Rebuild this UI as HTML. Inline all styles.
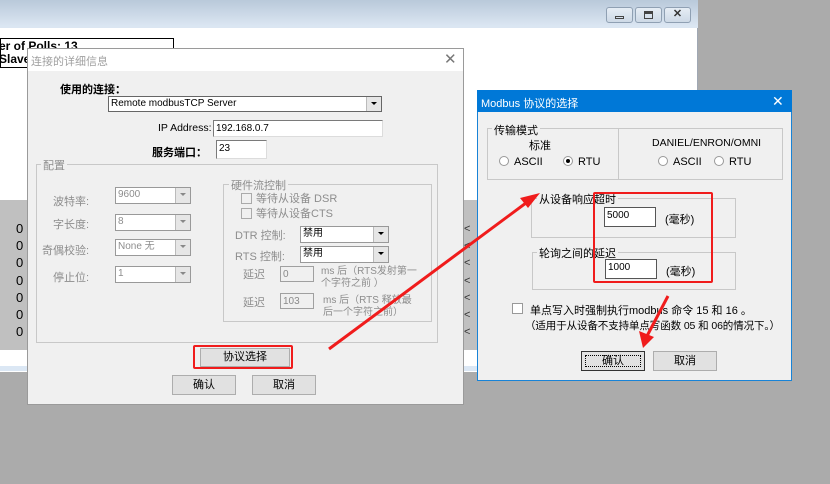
<!DOCTYPE html>
<html><head><meta charset="utf-8"><style>
*{margin:0;padding:0;box-sizing:border-box}
body{width:830px;height:484px;overflow:hidden;background:#ababab;position:relative;font-family:"Liberation Sans","Noto Sans CJK SC",sans-serif;font-size:11px;color:#000}
.a{position:absolute;white-space:nowrap}
.in{position:absolute;background:#fff;border:1px solid #7a7a7a;border-right-color:#dcdcdc;border-bottom-color:#dcdcdc;padding:1px 2px;font-size:10px;line-height:13px}
.dis{background:#f0f0f0;color:#8a8a8a;border-color:#a0a0a0}
.cb{position:absolute;border:1px solid #999;background:#fff;font-size:10px;line-height:13px;padding:0 2px}
.cb:after{content:"";position:absolute;right:0;top:0;width:14px;height:100%;background:#e6e6e6;border-left:1px solid #bbb}
.cb i{position:absolute;right:4px;top:5px;width:0;height:0;border-left:3px solid transparent;border-right:3px solid transparent;border-top:3px solid #000;z-index:2}
.g{color:#8d8d8d}
.grp{position:absolute;border:1px solid #c8c8c8}
.btn{position:absolute;background:#e1e1e1;border:1px solid #adadad;text-align:center;font-size:11px}
.rad{display:inline-block;width:10px;height:10px;border:1px solid #999;border-radius:50%;background:#fff;vertical-align:-1px;margin-right:5px;position:relative}
.chk{position:absolute;width:11px;height:11px;border:1px solid #999;background:#fff}
</style></head><body>
<div class="a" style="left:0;top:0;width:698px;height:372px;background:#fff;border-right:1px solid #a0a8b4"></div>
<div class="a" style="left:0;top:0;width:698px;height:26px;background:linear-gradient(#b9c9da,#dbe6f2)"></div>
<div class="a" style="left:606px;top:7px;width:27px;height:16px;border:1px solid #8fa0b3;border-radius:3px;background:linear-gradient(#e6edf5,#cdd9e6)"><div style="position:absolute;left:8px;top:8px;width:9px;height:3px;border:1px solid #444"></div></div>
<div class="a" style="left:635px;top:7px;width:27px;height:16px;border:1px solid #8fa0b3;border-radius:3px;background:linear-gradient(#e6edf5,#cdd9e6)"><div style="position:absolute;left:8px;top:3px;width:9px;height:8px;border:1px solid #444;border-top-width:3px"></div></div>
<div class="a" style="left:664px;top:7px;width:27px;height:16px;border:1px solid #8fa0b3;border-radius:3px;background:linear-gradient(#e6edf5,#cdd9e6);text-align:center;font-size:11px;line-height:13px;color:#333;font-weight:bold">✕</div>
<div class="a" style="left:0;top:26px;width:698px;height:2px;background:#dbe6f2"></div>
<div class="a" style="left:0;top:200px;width:697px;height:150px;background:#c0c0c0"></div>
<div class="a" style="left:0;top:366px;width:697px;height:5px;background:#dbe7f4"></div>
<div class="a" style="left:0;top:38px;width:174px;height:30px;border:1px solid #000;background:#fff"></div>
<div class="a" style="left:-1px;top:40px;font-weight:bold;font-size:12px;line-height:13px">er of Polls: 13<br>Slave</div>
<div class="a" style="left:16px;top:220px;font-size:13px;line-height:17.2px">0<br>0<br>0<br>0<br>0<br>0<br>0</div>
<div class="a" style="left:464px;top:221px;font-size:11px;line-height:17.2px;color:#333">&lt;<br>&lt;<br>&lt;<br>&lt;<br>&lt;<br>&lt;<br>&lt;</div>

<div class="a" style="left:27px;top:48px;width:437px;height:357px;background:#f0f0f0;border:1px solid #9a9a9a"></div>
<div class="a" style="left:28px;top:49px;width:435px;height:22px;background:#fff"></div>
<div class="a g" style="left:31px;top:53px;color:#a0a0a0">连接的详细信息</div>
<div class="a" style="left:444px;top:50px;font-size:15px;color:#777">✕</div>
<div class="a" style="left:60px;top:81px;font-weight:bold">使用的连接：</div>
<div class="cb" style="left:108px;top:96px;width:274px;height:16px;border-color:#666">Remote modbusTCP Server<i></i></div>
<div class="a" style="left:158px;top:122px;font-size:10.5px">IP Address:</div>
<div class="in" style="left:213px;top:120px;width:170px;height:17px">192.168.0.7</div>
<div class="a" style="left:152px;top:144px;font-weight:bold">服务端口：</div>
<div class="in" style="left:216px;top:140px;width:51px;height:19px">23</div>
<div class="grp" style="left:36px;top:164px;width:402px;height:179px"></div>
<div class="a g" style="left:41px;top:157px;background:#f0f0f0;padding:0 2px">配置</div>
<div class="a g" style="left:53px;top:193px">波特率:</div>
<div class="cb dis g" style="left:115px;top:187px;width:76px;height:17px">9600<i style="border-top-color:#888"></i></div>
<div class="a g" style="left:53px;top:216px">字长度:</div>
<div class="cb dis g" style="left:115px;top:214px;width:76px;height:17px">8<i style="border-top-color:#888"></i></div>
<div class="a g" style="left:42px;top:242px">奇偶校验:</div>
<div class="cb dis g" style="left:115px;top:239px;width:76px;height:17px">None 无<i style="border-top-color:#888"></i></div>
<div class="a g" style="left:53px;top:269px">停止位:</div>
<div class="cb dis g" style="left:115px;top:266px;width:76px;height:17px">1<i style="border-top-color:#888"></i></div>
<div class="grp" style="left:223px;top:184px;width:209px;height:138px"></div>
<div class="a g" style="left:229px;top:177px;background:#f0f0f0;padding:0 2px">硬件流控制</div>
<div class="chk" style="left:241px;top:193px;border-color:#aaa;background:#f0f0f0"></div>
<div class="a g" style="left:256px;top:190px">等待从设备 DSR</div>
<div class="chk" style="left:241px;top:208px;border-color:#aaa;background:#f0f0f0"></div>
<div class="a g" style="left:256px;top:205px">等待从设备CTS</div>
<div class="a g" style="left:235px;top:227px">DTR 控制:</div>
<div class="cb" style="left:300px;top:226px;width:89px;height:17px">禁用<i></i></div>
<div class="a g" style="left:235px;top:248px">RTS 控制:</div>
<div class="cb" style="left:300px;top:246px;width:89px;height:17px">禁用<i></i></div>
<div class="a g" style="left:243px;top:266px">延迟</div>
<div class="in dis" style="left:280px;top:266px;width:34px;height:16px">0</div>
<div class="a g" style="left:321px;top:266px;font-size:10px;line-height:12px">ms 后（RTS发射第一<br>个字符之前 ）</div>
<div class="a g" style="left:243px;top:294px">延迟</div>
<div class="in dis" style="left:280px;top:293px;width:34px;height:16px">103</div>
<div class="a g" style="left:323px;top:295px;font-size:10px;line-height:12px">ms 后（RTS 释放最<br>后一个字符之前）</div>
<div class="btn" style="left:200px;top:348px;width:90px;height:19px;line-height:17px">协议选择</div>
<div class="btn" style="left:172px;top:375px;width:64px;height:20px;line-height:18px">确认</div>
<div class="btn" style="left:252px;top:375px;width:64px;height:20px;line-height:18px">取消</div>

<div class="a" style="left:477px;top:90px;width:315px;height:291px;background:#f0f0f0;border:1px solid #1883d7"></div>
<div class="a" style="left:477px;top:90px;width:315px;height:22px;background:#0078d7"></div>
<div class="a" style="left:481px;top:95px;color:#fff;font-size:11px">Modbus 协议的选择</div>
<div class="a" style="left:772px;top:93px;color:#fff;font-size:14px">✕</div>
<div class="grp" style="left:487px;top:128px;width:296px;height:52px"></div>
<div class="a" style="left:618px;top:128px;width:1px;height:52px;background:#c8c8c8"></div>
<div class="a" style="left:492px;top:122px;background:#f0f0f0;padding:0 2px">传输模式</div>
<div class="a" style="left:529px;top:137px">标准</div>
<div class="a" style="left:499px;top:156px"><span class="rad"></span>ASCII</div>
<div class="a" style="left:563px;top:156px"><span class="rad"><b style="position:absolute;left:2px;top:2px;width:4px;height:4px;border-radius:50%;background:#000"></b></span>RTU</div>
<div class="a" style="left:652px;top:137px;font-size:10.5px">DANIEL/ENRON/OMNI</div>
<div class="a" style="left:658px;top:156px"><span class="rad"></span>ASCII</div>
<div class="a" style="left:714px;top:156px"><span class="rad"></span>RTU</div>
<div class="grp" style="left:531px;top:198px;width:205px;height:40px"></div>
<div class="a" style="left:537px;top:191px;background:#f0f0f0;padding:0 2px">从设备响应超时</div>
<div class="in" style="left:604px;top:207px;width:52px;height:20px;border-color:#555">5000</div>
<div class="a" style="left:665px;top:211px">(毫秒)</div>
<div class="grp" style="left:532px;top:252px;width:204px;height:38px"></div>
<div class="a" style="left:537px;top:245px;background:#f0f0f0;padding:0 2px">轮询之间的延迟</div>
<div class="in" style="left:605px;top:259px;width:52px;height:20px;border-color:#555">1000</div>
<div class="a" style="left:666px;top:263px">(毫秒)</div>
<div class="chk" style="left:512px;top:303px"></div>
<div class="a" style="left:530px;top:302px">单点写入时强制执行modbus 命令 15 和 16 。</div>
<div class="a" style="left:525px;top:318px;font-size:10.5px;letter-spacing:-0.1px">（适用于从设备不支持单点写函数 05 和 06的情况下。）</div>
<div class="btn" style="left:581px;top:351px;width:64px;height:20px;line-height:18px;border-color:#333"><div style="position:absolute;left:3px;top:3px;right:3px;bottom:3px;border:1px dotted #000"></div>确认</div>
<div class="btn" style="left:653px;top:351px;width:64px;height:20px;line-height:18px">取消</div>

<div class="a" style="left:193px;top:345px;width:100px;height:24px;border:2px solid #f01c1c;border-radius:2px"></div>
<div class="a" style="left:593px;top:192px;width:120px;height:91px;border:2px solid #f01c1c;border-radius:2px"></div>
<svg class="a" style="left:0;top:0" width="830" height="484">
<line x1="329" y1="349" x2="530" y2="200" stroke="#f01c1c" stroke-width="3"/>
<polygon points="540,193 520,198 528,208" fill="#f01c1c"/>
<line x1="668" y1="296" x2="647" y2="336" stroke="#f01c1c" stroke-width="3"/>
<polygon points="643,348 639,331 654,337" fill="#f01c1c"/>
</svg>
</body></html>
